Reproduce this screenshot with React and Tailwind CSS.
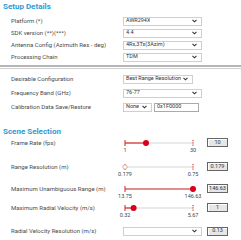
import React from "react";

const Chevron = () => (
  <svg width="5" height="4" viewBox="0 0 5 4" className="shrink-0">
    <path d="M0.5 0.8 L2.5 2.8 L4.5 0.8" fill="none" stroke="#333" strokeWidth="1.1" />
  </svg>
);

const Select = ({ value, width = "w-[79px]" }) => (
  <div
    className={`${width} h-[9px] border border-[#cfcfcf] bg-white flex items-center justify-between pl-[2px] pr-[4px] text-[5.5px] text-[#333] leading-none`}
  >
    <span className="whitespace-nowrap overflow-hidden">{value}</span>
    <Chevron />
  </div>
);

const ValueBox = ({ value }) => (
  <div className="w-[21px] h-[9px] ml-[14px] bg-[#e6e6e6] border border-[#666] shadow-[inset_1px_1px_0_#fff] flex items-center justify-center text-[5.5px] text-[#333] leading-none">
    {value}
  </div>
);

const Label = ({ children, w = "w-[123px]" }) => (
  <div className={`${w} shrink-0 pl-[11px] text-[6px] text-[#4a4a4a] leading-none whitespace-nowrap`}>
    {children}
  </div>
);

const SelectRow = ({ label, h = "h-[12px]", children }) => (
  <div className={`flex items-center ${h}`}>
    <Label>{label}</Label>
    {children}
  </div>
);

// slider: 68px track between end ticks
const Slider = ({ pos, min, max, disabled }) => (
  <div className="relative w-[68px] h-[17px] shrink-0">
    <svg width="72" height="10" viewBox="-2 0 72 10" className="absolute left-[-2px] top-0 overflow-visible">
      <line x1="0" y1="6" x2="68" y2="6" stroke="#d6d6d6" strokeWidth="1.2" />
      <line x1="0" y1="6" x2={pos} y2="6" stroke="#d9302c" strokeWidth="1.2" />
      <line x1="0" y1="3" x2="0" y2="9" stroke="#d9302c" strokeWidth="1.1" />
      <line x1="68" y1="3" x2="68" y2="9" stroke="#d9302c" strokeWidth="1.1" strokeDasharray="1.3 0.9" />
      {disabled ? (
        <circle cx={pos} cy="6" r="2.2" fill="#fff" stroke="#d8a0a0" strokeWidth="0.9" />
      ) : (
        <circle cx={pos} cy="6" r="3" fill="#d9001b" />
      )}
    </svg>
    <span className="absolute left-0 top-[11px] -translate-x-1/2 text-[5.5px] leading-none text-[#444]">{min}</span>
    <span className="absolute left-[68px] top-[11px] -translate-x-1/2 text-[5.5px] leading-none text-[#444]">{max}</span>
  </div>
);

const SliderRow = ({ label, h, pos, min, max, value, disabled }) => (
  <div className={`flex items-start ${h}`}>
    <div className="w-[125px] shrink-0 pl-[11px] pt-[3px] text-[6px] text-[#4a4a4a] leading-none whitespace-nowrap">
      {label}
    </div>
    <Slider pos={pos} min={min} max={max} disabled={disabled} />
    <div className="pt-[1px]">
      <ValueBox value={value} />
    </div>
  </div>
);

export default function App() {
  return (
    <div className="w-[241px] h-[240px] overflow-hidden bg-white font-['Roboto',sans-serif]">
      <h2 className="h-[15px] pl-[3px] pt-[2px] text-[8px] font-bold leading-[10px] text-[#2b9bd3]">
        Setup Details
      </h2>
      <SelectRow label="Platform (*)">
        <Select value="AWR294X" />
      </SelectRow>
      <SelectRow label="SDK version (**)(***)">
        <Select value="4.4" />
      </SelectRow>
      <SelectRow label="Antenna Config (Azimuth Res - deg)">
        <Select value="4Rx,3Tx(3Azim)" />
      </SelectRow>
      <SelectRow label="Processing Chain">
        <Select value="TDM" />
      </SelectRow>

      <div className="mt-[2px] border-t-2 border-[#b5b5b5]" />
      <div className="mt-[1px] border-t border-[#cfcfcf]" />

      <div className="pt-[3px]">
        <SelectRow label="Desirable Configuration" h="h-[14px]">
          <Select value="Best Range Resolution" width="w-[70px]" />
        </SelectRow>
        <SelectRow label="Frequency Band (GHz)" h="h-[14px]">
          <Select value="76-77" />
        </SelectRow>
        <SelectRow label="Calibration Data Save/Restore" h="h-[14px]">
          <Select value="None" width="w-[29px]" />
          <div className="ml-[2px] w-[45px] h-[9px] border border-[#aaa] bg-white flex items-center pl-[2px] text-[5.5px] text-[#333] leading-none">
            0x1F0000
          </div>
        </SelectRow>
      </div>

      <h2 className="h-[23px] pl-[3px] pt-[13px] text-[8px] font-bold leading-[10px] text-[#2b9bd3]">
        Scene Selection
      </h2>

      <SliderRow label="Frame Rate (fps)" h="h-[24px]" pos={21} min="1" max="30" value="10" />
      <SliderRow label="Range Resolution (m)" h="h-[22px]" pos={0} min="0.179" max="0.75" value="0.179" disabled />
      <SliderRow label="Maximum Unambiguous Range (m)" h="h-[19px]" pos={68} min="13.75" max="146.63" value="146.63" />
      <SliderRow label="Maximum Radial Velocity (m/s)" h="h-[22px]" pos={8.6} min="0.32" max="5.67" value="1" />

      <div className="flex items-center h-[14px]">
        <Label>Radial Velocity Resolution (m/s)</Label>
        <Select value="" />
        <div className="ml-[-9px]">
          <ValueBox value="0.13" />
        </div>
      </div>
    </div>
  );
}
